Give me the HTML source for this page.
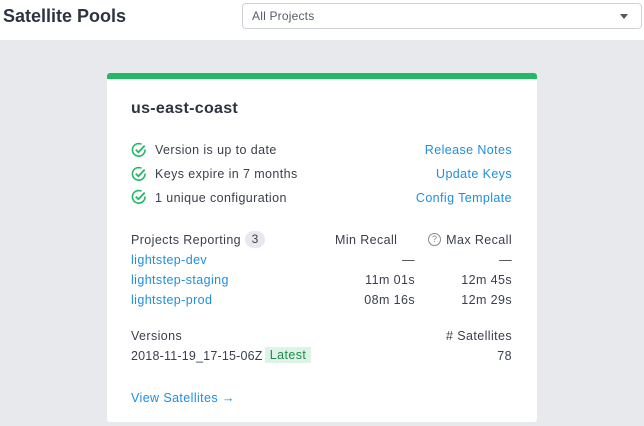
<!DOCTYPE html>
<html><head><style>
body{margin:0;width:644px;height:426px;overflow:hidden;background:#e8e9ed;font-family:"Liberation Sans",sans-serif;color:#3a3f4b;position:relative}
.hdr{position:absolute;left:0;top:0;width:644px;height:40px;background:#fff}
.t{position:absolute;white-space:nowrap;font-size:12.5px;line-height:16px;letter-spacing:0.4px}
.a{color:#1f8ee0}
.r{text-align:right}
.card{position:absolute;left:107px;top:73px;width:430px;height:349px;background:#fff;border-radius:3px;overflow:hidden}
.bar{position:absolute;left:0;top:0;width:430px;height:6px;background:#22b866}
svg.c{position:absolute;width:16px;height:16px}
</style></head><body>
<div class="hdr"></div>
<div class="t" style="left:3px;top:5px;font-size:18px;line-height:22px;font-weight:bold;color:#2d3340;letter-spacing:0">Satellite Pools</div>
<div style="position:absolute;left:242px;top:3px;width:398px;height:24px;border:1px solid #cfd2d8;border-radius:4px;background:#fff"></div>
<div class="t" style="left:252px;top:8px;font-size:12px;color:#555c6a;letter-spacing:0.2px">All Projects</div>
<div style="position:absolute;left:620px;top:14px;width:0;height:0;border-left:4px solid transparent;border-right:4px solid transparent;border-top:5px solid #555"></div>
<div class="card"><div class="bar"></div></div>
<div class="t" style="left:131px;top:99px;font-size:16px;line-height:20px;font-weight:bold;color:#2d3340;letter-spacing:0.3px">us-east-coast</div>
<svg class="c" style="left:131px;top:142px" viewBox="0 0 16 16"><path d="M14 7.5A6.3 6.3 0 1 1 10.5 2.2" fill="none" stroke="#22b866" stroke-width="1.6"/><path d="M4.8 7.6l2.6 2.6 6.3-6.6" fill="none" stroke="#22b866" stroke-width="1.8"/></svg>
<svg class="c" style="left:131px;top:166px" viewBox="0 0 16 16"><path d="M14 7.5A6.3 6.3 0 1 1 10.5 2.2" fill="none" stroke="#22b866" stroke-width="1.6"/><path d="M4.8 7.6l2.6 2.6 6.3-6.6" fill="none" stroke="#22b866" stroke-width="1.8"/></svg>
<svg class="c" style="left:131px;top:189px" viewBox="0 0 16 16"><path d="M14 7.5A6.3 6.3 0 1 1 10.5 2.2" fill="none" stroke="#22b866" stroke-width="1.6"/><path d="M4.8 7.6l2.6 2.6 6.3-6.6" fill="none" stroke="#22b866" stroke-width="1.8"/></svg>
<div class="t" style="left:155px;top:142px">Version is up to date</div>
<div class="t" style="left:155px;top:166px">Keys expire in 7 months</div>
<div class="t" style="left:155px;top:190px">1 unique configuration</div>
<div class="t a r" style="right:132px;top:142px">Release Notes</div>
<div class="t a r" style="right:132px;top:166px">Update Keys</div>
<div class="t a r" style="right:132px;top:190px">Config Template</div>
<div class="t" style="left:131px;top:232px">Projects Reporting</div>
<div style="position:absolute;left:245px;top:231px;width:20px;height:17px;border-radius:9px;background:#e8e9ed;font-size:12px;text-align:center;line-height:17px">3</div>
<div class="t" style="left:335px;top:232px">Min Recall</div>
<div style="position:absolute;left:428px;top:233px;width:11px;height:11px;border:1px solid #888;border-radius:50%;font-size:9px;line-height:11px;text-align:center;color:#888">?</div>
<div class="t r" style="right:132px;top:232px">Max Recall</div>
<div class="t a" style="left:131px;top:252px">lightstep-dev</div>
<div class="t a" style="left:131px;top:272px">lightstep-staging</div>
<div class="t a" style="left:131px;top:292px">lightstep-prod</div>
<div class="t r" style="right:229px;top:252px">—</div>
<div class="t r" style="right:229px;top:272px">11m 01s</div>
<div class="t r" style="right:229px;top:292px">08m 16s</div>
<div class="t r" style="right:132px;top:252px">—</div>
<div class="t r" style="right:132px;top:272px">12m 45s</div>
<div class="t r" style="right:132px;top:292px">12m 29s</div>
<div class="t" style="left:131px;top:328px">Versions</div>
<div class="t r" style="right:132px;top:328px"># Satellites</div>
<div class="t" style="left:131px;top:348px;letter-spacing:0.2px">2018-11-19_17-15-06Z</div>
<div style="position:absolute;left:265px;top:347px;width:46px;height:16px;background:#ddf3e5;color:#1f8a4c;font-size:12.5px;line-height:16px;text-align:center;letter-spacing:0.4px">Latest</div>
<div class="t r" style="right:132px;top:348px">78</div>
<div class="t a" style="left:131px;top:390px">View Satellites <span style="font-weight:bold">→</span></div>
</body></html>
